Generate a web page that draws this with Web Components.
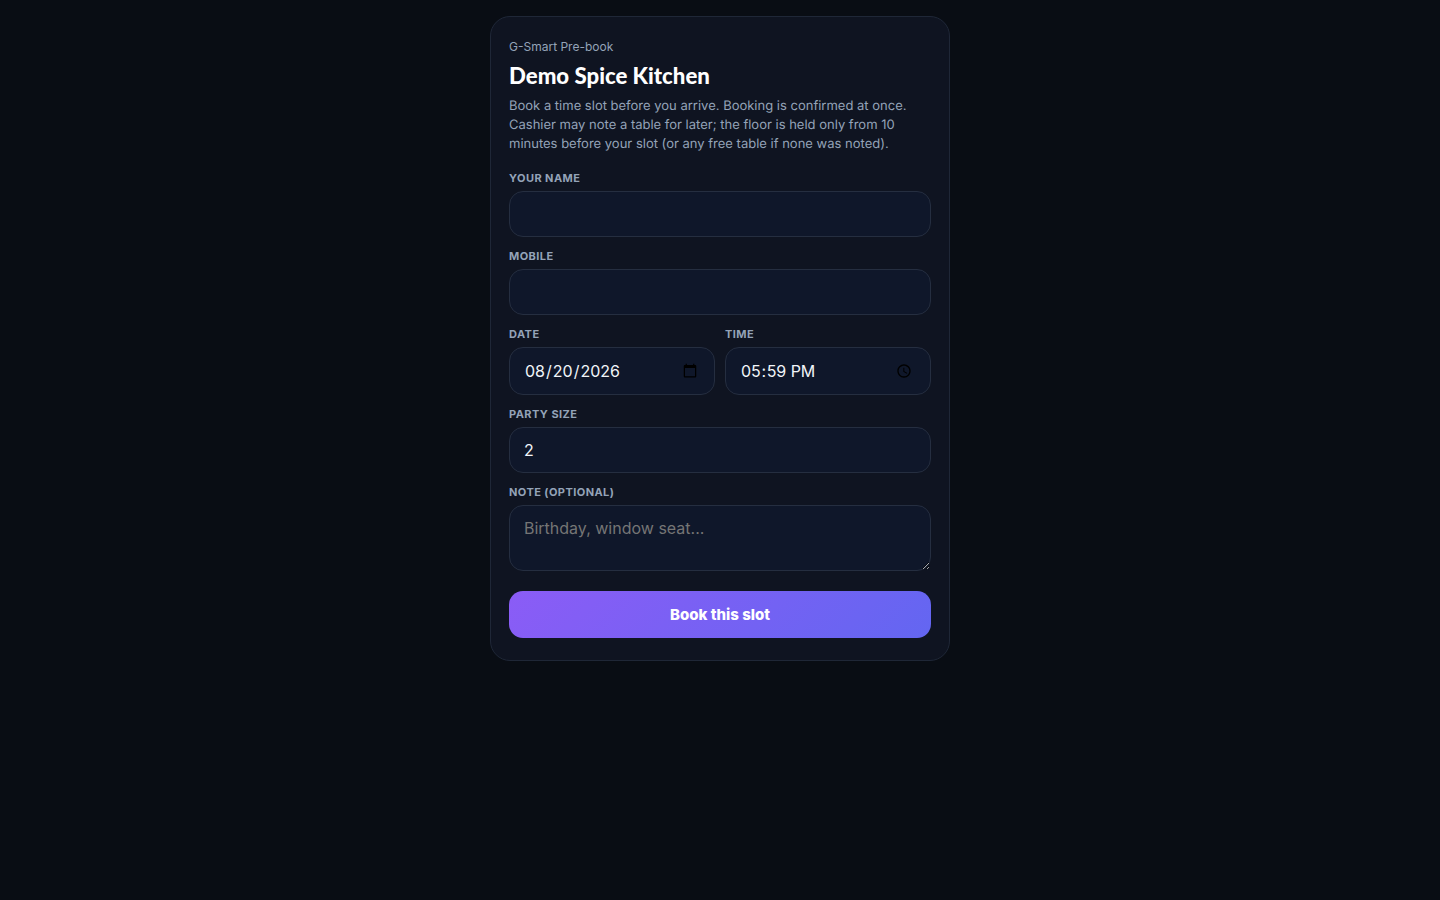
<!DOCTYPE html>
<html lang="en">
<head>
<meta charset="utf-8">
<title>Demo Spice Kitchen</title>
<style>
  html, body { margin: 0; min-height: 100%; background: #090d14; }
  body { font-family: Inter, "Liberation Sans", sans-serif; color: #f1f5f9; }
</style>
</head>
<body>
<prebook-page>
  <booking-card heading="Demo Spice Kitchen" brand="G-Smart Pre-book">
    Book a time slot before you arrive. Booking is confirmed at once. Cashier may note a table for later; the floor is held only from 10 minutes before your slot (or any free table if none was noted).
    <form-field slot="fields" label="Your name"></form-field>
    <form-field slot="fields" label="Mobile" type="tel"></form-field>
    <field-row slot="fields">
      <form-field label="Date" type="date" value="2026-08-20"></form-field>
      <form-field label="Time" type="time" value="17:59"></form-field>
    </field-row>
    <form-field slot="fields" label="Party size" type="number" value="2"></form-field>
    <form-field slot="fields" label="Note (optional)" type="textarea" placeholder="Birthday, window seat..."></form-field>
    <submit-button slot="fields">Book this slot</submit-button>
  </booking-card>
</prebook-page>

<script>
class PrebookPage extends HTMLElement {
  constructor() {
    super();
    this.attachShadow({ mode: "open" }).innerHTML = `
      <style>
        :host { display: flex; justify-content: center; padding: 16px; min-height: 100vh; box-sizing: border-box; align-items: flex-start; }
      </style>
      <slot></slot>`;
  }
}

class BookingCard extends HTMLElement {
  constructor() {
    super();
    this.attachShadow({ mode: "open" }).innerHTML = `
      <style>
        :host {
          display: block;
          width: 460px;
          box-sizing: border-box;
          padding: 22px 18px;
          background: #0f1421;
          border: 1px solid #1f2737;
          border-radius: 20px;
        }
        .brand { font-size: 12px; line-height: 15px; color: #94a3b8; }
        h1 {
          margin: 7px 0 6px;
          font: 900 22.2px/30px Lato, "Liberation Sans", sans-serif;
          color: #fff;
        }
        p { margin: 0 0 18px; font-size: 13px; line-height: 19px; color: #94a3b8; text-rendering: geometricPrecision; }
        .fields { display: flex; flex-direction: column; gap: 13px; }
      </style>
      <div class="brand"></div>
      <h1></h1>
      <p><slot></slot></p>
      <div class="fields"><slot name="fields"></slot></div>`;
  }
  connectedCallback() {
    this.shadowRoot.querySelector(".brand").textContent = this.getAttribute("brand");
    this.shadowRoot.querySelector("h1").textContent = this.getAttribute("heading");
  }
}

class FieldRow extends HTMLElement {
  constructor() {
    super();
    this.attachShadow({ mode: "open" }).innerHTML = `
      <style>
        :host { display: grid; grid-template-columns: 1fr 1fr; gap: 10px; }
      </style>
      <slot></slot>`;
  }
}

class FormField extends HTMLElement {
  constructor() {
    super();
    this.attachShadow({ mode: "open" }).innerHTML = `
      <style>
        :host { display: block; min-width: 0; }
        label {
          display: block;
          margin-bottom: 6px;
          font-size: 11px;
          line-height: 13px;
          font-weight: 700;
          letter-spacing: 0.04em;
          text-transform: uppercase;
          color: #94a3b8;
        }
        input, textarea {
          display: block;
          width: 100%;
          box-sizing: border-box;
          padding: 12px 14px;
          font: 16px Inter, "Liberation Sans", sans-serif;
          color: #f1f5f9;
          background: #0f172a;
          border: 1px solid #252e40;
          border-radius: 14px;
          outline: none;
        }
        input[type="date"], input[type="time"] { height: 48px; }
        input[type="time"] { letter-spacing: -0.2px; }
        textarea { height: 66px; resize: vertical; }
      </style>
      <label for="f"></label>
      <span id="slot"></span>`;
  }
  connectedCallback() {
    const type = this.getAttribute("type") || "text";
    const root = this.shadowRoot;
    root.querySelector("label").textContent = this.getAttribute("label");
    const el = document.createElement(type === "textarea" ? "textarea" : "input");
    el.id = "f";
    if (type !== "textarea") el.type = type;
    if (this.hasAttribute("value")) el.value = this.getAttribute("value");
    if (this.hasAttribute("placeholder")) el.placeholder = this.getAttribute("placeholder");
    root.querySelector("#slot").replaceWith(el);
  }
}

class SubmitButton extends HTMLElement {
  constructor() {
    super();
    this.attachShadow({ mode: "open" }).innerHTML = `
      <style>
        :host { display: block; margin-top: 7px; }
        button {
          display: block;
          width: 100%;
          height: 47px;
          border: 0;
          border-radius: 14px;
          font: 800 15px Inter, "Liberation Sans", sans-serif;
          color: #fff;
          background: linear-gradient(135deg, #8b5cf6, #6366f1);
        }
      </style>
      <button type="button"><slot></slot></button>`;
  }
}

customElements.define("prebook-page", PrebookPage);
customElements.define("booking-card", BookingCard);
customElements.define("field-row", FieldRow);
customElements.define("form-field", FormField);
customElements.define("submit-button", SubmitButton);
</script>
</body>
</html>
